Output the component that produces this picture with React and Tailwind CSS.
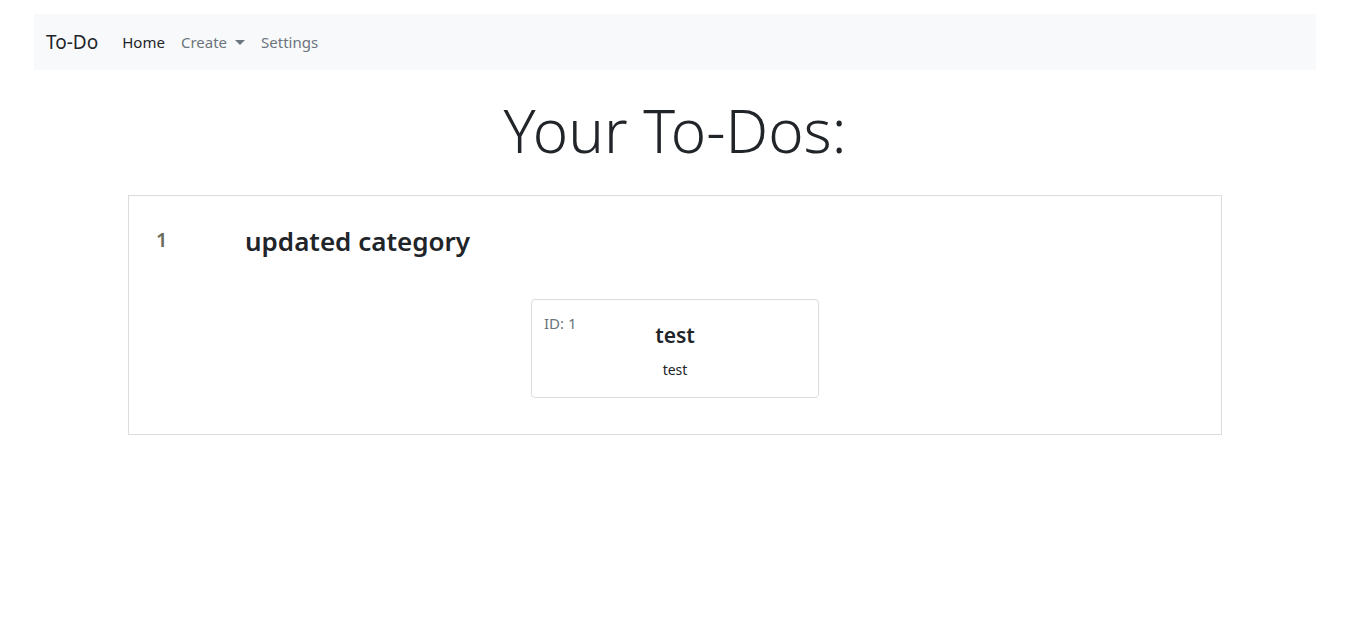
import React from 'react';

const font = { fontFamily: '"Noto Sans", "Open Sans", Arial, sans-serif' };

export default function App() {
  return (
    <div className="min-h-screen bg-white text-[#212529]" style={font}>
      <div className="pt-[14px] px-[34px]">
        <nav className="h-[56px] bg-[#f8f9fa] flex items-center px-[12px]">
          <span className="text-[19px] text-[#212529] mr-[16px] leading-none">To-Do</span>
          <a className="px-[8px] text-[15px] text-[#212529]">Home</a>
          <a className="px-[8px] text-[15px] text-[#6c757d] flex items-center">
            Create
            <span className="ml-[8px] inline-block w-0 h-0 border-l-[5px] border-r-[5px] border-t-[5px] border-l-transparent border-r-transparent border-t-[#6c757d]"></span>
          </a>
          <a className="px-[8px] text-[15px] text-[#6c757d]">Settings</a>
        </nav>
      </div>

      <h1 className="text-center text-[60px] font-light leading-[72px] mt-[24px] text-[#212529]">
        Your To-Dos:
      </h1>

      <div className="mx-auto w-[1094px] mt-[29px] border border-[#dcdcdc] h-[240px] px-[27px] pt-[30px]">
        <div className="flex items-start">
          <div className="w-[89px] text-[20px] font-semibold text-[#6c6c5c] leading-[1.2] pt-[2px]">1</div>
          <div className="text-[26px] font-semibold leading-[1.2] text-[#212529]">updated category</div>
        </div>
        <div className="flex justify-center mt-[42px]">
          <div className="w-[288px] h-[99px] border border-[#dcdcdc] rounded-[4px] relative">
            <div className="absolute left-[12px] top-[12px] text-[15px] text-[#6c757d]">ID: 1</div>
            <div className="text-center pt-[23px] text-[21px] font-semibold leading-[1.2]">test</div>
            <div className="text-center mt-[11px] text-[14px]">test</div>
          </div>
        </div>
      </div>
    </div>
  );
}
